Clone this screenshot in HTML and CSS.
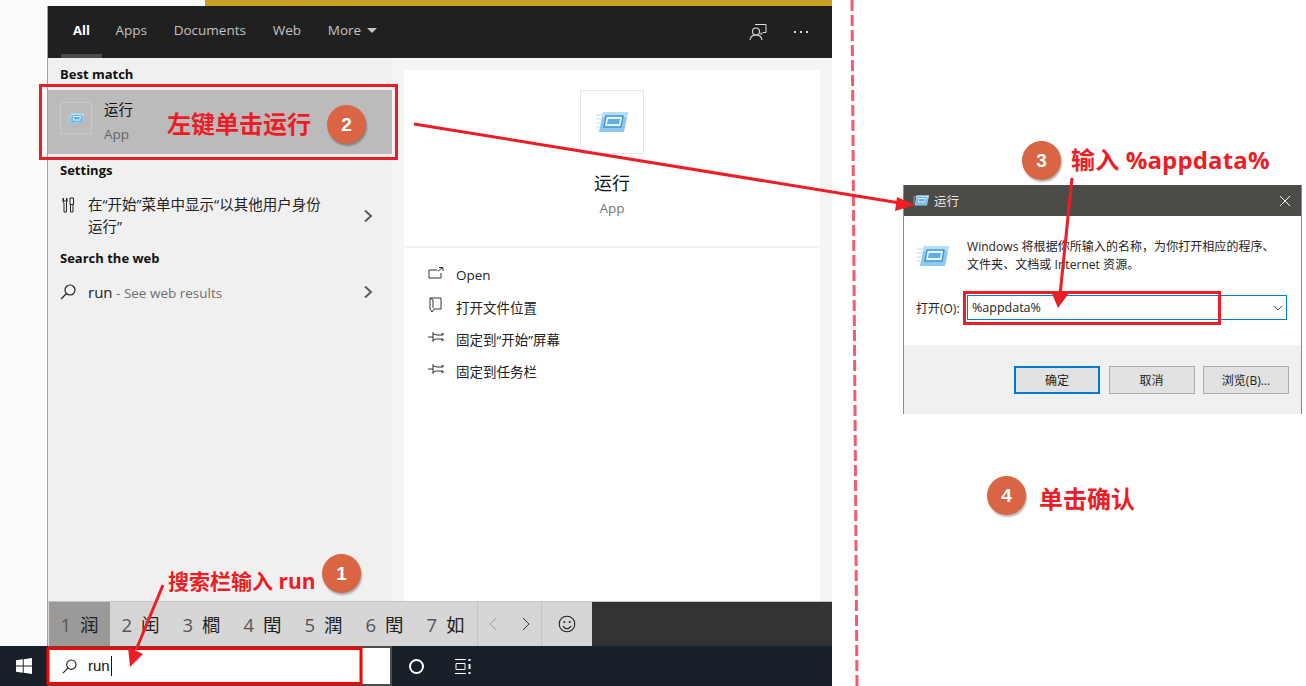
FILE: index.html
```html
<!DOCTYPE html>
<html lang="zh-CN">
<head>
  <meta charset="UTF-8">
  <title>运行 %appdata%</title>
  <link rel="stylesheet" href="styles.css">
</head>
<body>
  <svg class="defs" width="0" height="0">
    <symbol id="run-icon" viewBox="0 0 32 22">
      <path d="M7 1h25l-4 20H3z" fill="#8cc8f0"/>
      <path d="M7 1h25l-1 5H6z" fill="#b5def7"/>
      <path d="M10 5h17l-2 11H8z" fill="#eaf6fd" stroke="#3d95d8" stroke-width="1.4"/>
      <path d="M12 8h12l-1 5H11z" fill="#5eaee8"/>
      <path d="M0 4h6M0 8h5M0 12h4M0 16h3" stroke="#b5def7" stroke-width="1.2"/>
    </symbol>
    <symbol id="pin-icon" viewBox="0 0 16 12">
      <path d="M0 6h5M5 1v10M5 3l4 1h6V2l-2 2M5 9l4-1h6v2l-2-2" fill="none" stroke="#333" stroke-width="1"/>
    </symbol>
    <symbol id="chevron" viewBox="0 0 10 14">
      <path d="M2 1.5 8 7l-6 5.500" fill="none" stroke="#555" stroke-width="1.800"/>
    </symbol>
    <symbol id="search-icon" viewBox="0 0 16 16">
      <circle cx="10" cy="6" r="5" fill="none" stroke="#222" stroke-width="1.200"/>
      <path d="M6.500 9.500 1 15" stroke="#222" stroke-width="1.300"/>
    </symbol>
  </svg>

  <div class="desktop">
    <div class="screen">
      <div class="wallpaper-strip"></div>

      <div class="search-window">
        <header class="tabs">
          <nav class="tab-list">
            <span class="tab active">All</span>
            <span class="tab">Apps</span>
            <span class="tab">Documents</span>
            <span class="tab">Web</span>
            <span class="tab">More <i class="caret"></i></span>
          </nav>
          <div class="tab-tools">
            <svg class="feedback" width="18" height="18" viewBox="0 0 18 18">
              <path d="M6 1.500h11v8h-3l-2 2V9.500" fill="none" stroke="#ddd" stroke-width="1"/>
              <circle cx="7" cy="8.500" r="3.500" fill="#202020" stroke="#ddd" stroke-width="1.100"/>
              <path d="M1 17c.5-3.500 3-5 6-5s5.500 1.500 6 5" fill="none" stroke="#ddd" stroke-width="1.100"/>
            </svg>
            <span class="dots"><i></i><i></i><i></i></span>
          </div>
        </header>

        <div class="results">
          <aside class="result-list">
            <h3 class="group-title first">Best match</h3>
            <div class="match">
              <span class="match-icon"><svg width="16" height="11"><use href="#run-icon"/></svg></span>
              <div class="match-text">
                <div class="match-name">运行</div>
                <div class="match-type">App</div>
              </div>
            </div>

            <h3 class="group-title">Settings</h3>
            <div class="result-row settings-row">
              <svg class="row-icon" width="14" height="16" viewBox="0 0 14 16">
                <path d="M3 6v9h2.500V6M3 6C1.500 5 1.500 2 2.500 1v3h3V1c1 1 1 4-.5 5M9 1h3.500v6.500H9zM9.500 7.500V15h2.500V7.500" fill="none" stroke="#222" stroke-width="1"/>
              </svg>
              <div class="row-text">在“开始”菜单中显示“以其他用户身份运行”</div>
              <svg class="row-chevron" width="10" height="14"><use href="#chevron"/></svg>
            </div>

            <h3 class="group-title">Search the web</h3>
            <div class="result-row web-row">
              <svg class="row-icon" width="16" height="16"><use href="#search-icon"/></svg>
              <div class="row-text"><span class="query">run</span><span class="muted"> - See web results</span></div>
              <svg class="row-chevron" width="10" height="14"><use href="#chevron"/></svg>
            </div>
          </aside>

          <section class="preview">
            <div class="preview-head">
              <span class="preview-icon"><svg width="32" height="22"><use href="#run-icon"/></svg></span>
              <div class="preview-name">运行</div>
              <div class="preview-type">App</div>
            </div>
            <ul class="actions">
              <li>
                <svg width="16" height="12" viewBox="0 0 16 12"><path d="M9 3H1v8h12V6M10 4l5-3.500M11 .5h4V4" fill="none" stroke="#333" stroke-width="1"/></svg>
                Open
              </li>
              <li>
                <svg width="14" height="16" viewBox="0 0 14 16"><path d="M1 1h11v11H5l-2 3-2-3zM1 1l3 2v8" fill="none" stroke="#333" stroke-width="1"/></svg>
                打开文件位置
              </li>
              <li><svg width="16" height="12"><use href="#pin-icon"/></svg>固定到“开始”屏幕</li>
              <li><svg width="16" height="12"><use href="#pin-icon"/></svg>固定到任务栏</li>
            </ul>
          </section>
        </div>

        <footer class="ime">
          <div class="candidates">
            <span class="cand current"><b>1</b>润</span>
            <span class="cand"><b>2</b>闰</span>
            <span class="cand"><b>3</b>櫚</span>
            <span class="cand"><b>4</b>閏</span>
            <span class="cand"><b>5</b>潤</span>
            <span class="cand"><b>6</b>閏</span>
            <span class="cand"><b>7</b>如</span>
          </div>
          <div class="ime-nav">
            <svg width="10" height="14" viewBox="0 0 10 14"><path d="M8 1 2 7l6 6" fill="none" stroke="#999" stroke-width="1"/></svg>
            <svg width="10" height="14" viewBox="0 0 10 14"><path d="m2 1 6 6-6 6" fill="none" stroke="#333" stroke-width="1"/></svg>
          </div>
          <div class="ime-emoji">
            <svg width="18" height="18" viewBox="0 0 18 18">
              <circle cx="9" cy="9" r="7.800" fill="none" stroke="#222" stroke-width="1.100"/>
              <circle cx="6.300" cy="7" r="1" fill="#222"/><circle cx="11.700" cy="7" r="1" fill="#222"/>
              <path d="M5 11c1 2 2.500 2.800 4 2.800s3-.8 4-2.800" fill="none" stroke="#222" stroke-width="1.100"/>
            </svg>
          </div>
        </footer>
      </div>

      <div class="taskbar">
        <svg class="start-logo" width="16" height="16" viewBox="0 0 16 16">
          <path d="M0 2.300 6.800 1.300v6.200H0zM7.700 1.200 16 0v7.500H7.700zM0 8.400h6.800v6.300L0 13.700zM7.700 8.400H16V16l-8.300-1.200z" fill="#fff"/>
        </svg>
        <div class="taskbar-search">
          <svg width="15" height="15"><use href="#search-icon"/></svg>
          <span class="taskbar-query">run</span>
        </div>
        <span class="cortana"></span>
        <svg class="task-view" width="16" height="15" viewBox="0 0 16 15">
          <path d="M0 .5h11M0 14.500h11M1 4.500h9v6H1z" fill="none" stroke="#fff" stroke-width="1"/>
          <path d="M14.500 0v2M14.500 5v5M14.500 13v2" stroke="#fff" stroke-width="2"/>
        </svg>
      </div>
    </div>

    <div class="run-dialog">
      <div class="run-title">
        <svg width="16" height="11"><use href="#run-icon"/></svg>
        <span>运行</span>
        <svg class="run-close" width="12" height="12" viewBox="0 0 12 12"><path d="m1 1 10 10M11 1 1 11" stroke="#fff" stroke-width="1"/></svg>
      </div>
      <div class="run-body">
        <div class="run-info">
          <svg width="32" height="22"><use href="#run-icon"/></svg>
          <p>Windows 将根据你所输入的名称，为你打开相应的程序、<br>文件夹、文档或 Internet 资源。</p>
        </div>
        <div class="run-open">
          <label>打开(O):</label>
          <div class="run-input">
            <span>%appdata%</span>
            <svg width="10" height="6" viewBox="0 0 10 6"><path d="m1 1 4 4 4-4" fill="none" stroke="#444" stroke-width="1"/></svg>
          </div>
        </div>
      </div>
      <div class="run-footer">
        <button class="default">确定</button>
        <button>取消</button>
        <button>浏览(B)...</button>
      </div>
    </div>

    <!-- annotations drawn over the screenshot -->
    <svg class="marks" width="1306" height="686" viewBox="0 0 1306 686">
      <path class="divider" d="M852 0 857 686"/>
      <rect class="box" x="40.500" y="85.500" width="356" height="73"/>
      <rect class="box" x="964.500" y="292.500" width="255" height="31"/>
      <rect class="box search-box" x="48" y="648.500" width="313" height="35"/>
      <path class="arrow" d="M414 124 900 203"/>
      <path class="head" d="M915 205 895 211 897 197z"/>
      <path class="arrow" d="M1072 178 1060 295"/>
      <path class="head" d="M1058 308 1051 291 1069 293z"/>
      <path class="arrow" d="M163 585 136 650"/>
      <path class="head" d="M130 667 128 647 143 654z"/>
    </svg>

    <span class="step step-1">1</span>
    <span class="step step-2">2</span>
    <span class="step step-3">3</span>
    <span class="step step-4">4</span>
    <span class="note note-1">搜索栏输入 run</span>
    <span class="note note-2">左键单击运行</span>
    <span class="note note-3">输入 %appdata%</span>
    <span class="note note-4">单击确认</span>
  </div>
</body>
</html>
```

FILE: styles.css
```css
* {
  box-sizing: border-box;
  font-family: 'Open Sans', 'Noto Sans CJK SC', sans-serif;
}

html, body {
  margin: 0;
  height: 100%;
  overflow: hidden;
  background-color: #fff;
}

.defs {
  position: absolute;
}

.desktop {
  position: relative;
  width: 1306px;
  height: 686px;
}

.screen {
  width: 832px;
  height: 686px;
  display: flex;
  flex-direction: column;
  background-color: #fbfbfb;
}

.wallpaper-strip {
  height: 6px;
  margin-left: 205px;
  background-color: #c9a021;
}

.search-window {
  flex: 1;
  min-height: 0;
  margin-left: 47px;
  display: flex;
  flex-direction: column;
  border-left: 1px solid #a0a0a0;
}

/* tabs */
.tabs {
  height: 52px;
  flex: none;
  display: flex;
  justify-content: space-between;
  background-color: #202020;
  color: #c4c4c4;
}

.tab-list {
  display: flex;
  padding-left: 13px;
}

.tab {
  position: relative;
  padding: 0 13.400px;
  font-size: 13.500px;
  line-height: 48px;
}

.tab.active {
  width: 41px;
  padding: 0 0 0 12px;
  color: #fff;
  font-size: 13px;
  font-weight: 700;
}

.tab.active::after {
  content: '';
  position: absolute;
  left: 0;
  right: 0;
  bottom: 0;
  height: 4px;
  background-color: #4b4b4b;
}

.caret {
  display: inline-block;
  margin-left: 2px;
  vertical-align: 2px;
  border-left: 5px solid transparent;
  border-right: 5px solid transparent;
  border-top: 5px solid #c4c4c4;
}

.tab-tools {
  display: flex;
  align-items: center;
  gap: 27px;
  padding: 0 24px 0 0;
}

.dots {
  display: flex;
  gap: 4px;
}

.dots i {
  width: 2px;
  height: 2px;
  background-color: #ddd;
}

/* results */
.results {
  flex: 1;
  min-height: 0;
  display: flex;
}

.result-list {
  width: 344px;
  background-color: #f0f0f0;
}

.group-title {
  margin: 0;
  padding: 0 0 0 12px;
  font-size: 13px;
  line-height: 20px;
  color: #111;
}

.group-title.first {
  padding-top: 6px;
  height: 32px;
}

.match {
  height: 64px;
  display: flex;
  align-items: center;
  gap: 12px;
  padding-left: 12px;
  background-color: #bbb;
  margin-bottom: 6px;
}

.match-icon {
  width: 32px;
  height: 32px;
  margin-top: -8px;
  display: flex;
  align-items: center;
  justify-content: center;
  border: 1px solid #c8c8c8;
}

.match-name {
  font-size: 14.500px;
  line-height: 24px;
  color: #111;
}

.match-type {
  font-size: 13.500px;
  line-height: 24px;
  color: #666;
}

.result-row {
  display: flex;
  align-items: center;
  position: relative;
  padding-left: 12px;
}

.row-icon {
  flex: none;
  margin-right: 12px;
}

.row-text {
  width: 245px;
  font-size: 14.500px;
  line-height: 22px;
  color: #222;
}

.row-chevron {
  position: absolute;
  right: 19px;
}

.settings-row {
  height: 68px;
  padding-top: 3px;
}

.settings-row .row-icon {
  align-self: flex-start;
  margin-top: 14px;
  margin-left: 1px;
  margin-right: 13px;
}

.web-row {
  height: 46px;
  padding-top: 2px;
}

.query {
  font-size: 15px;
  color: #222;
}

.muted {
  font-size: 13.500px;
  color: #6f6f6f;
}

/* preview */
.preview {
  flex: 1;
  display: flex;
  flex-direction: column;
  padding: 12px 12px 0 12px;
  background-color: #f5f5f5;
}

.preview-head {
  height: 178px;
  padding-top: 20px;
  display: flex;
  flex-direction: column;
  align-items: center;
  background-color: #fff;
  border-bottom: 2px solid #f2f2f2;
}

.preview-icon {
  width: 64px;
  height: 64px;
  display: flex;
  align-items: center;
  justify-content: center;
  border: 1px solid #e6e6e6;
}

.preview-name {
  margin-top: 15px;
  font-size: 18px;
  line-height: 28px;
  color: #111;
}

.preview-type {
  font-size: 13.500px;
  line-height: 22px;
  color: #777;
}

.actions {
  flex: 1;
  margin: 0;
  padding: 11px 0 0 24px;
  list-style: none;
  background-color: #fff;
}

.actions li {
  height: 32px;
  display: flex;
  align-items: center;
  gap: 12px;
  font-size: 13.500px;
  color: #222;
}

.actions svg {
  width: 16px;
  margin-top: -4px;
}

/* ime candidate bar */
.ime {
  height: 45px;
  flex: none;
  display: flex;
  background: linear-gradient(to right, #d6d6d6 544px, #333 544px);
  border-top: 1px solid #c4c4c4;
}

.candidates {
  width: 428px;
  display: flex;
  margin-left: 1px;
}

.cand {
  width: 61px;
  display: flex;
  align-items: center;
  justify-content: center;
  gap: 9px;
  font-size: 18.500px;
  color: #222;
}

.cand b {
  font-weight: 400;
  color: #555;
}

.cand.current {
  background-color: #9b9a98;
}

.ime-nav {
  width: 65px;
  display: flex;
  align-items: center;
  justify-content: space-between;
  padding: 0 10px;
  border-left: 1px solid #c2c2c2;
  border-right: 1px solid #c2c2c2;
}

.ime-emoji {
  width: 49px;
  display: flex;
  align-items: center;
  justify-content: center;
}

/* taskbar */
.taskbar {
  height: 40px;
  flex: none;
  display: flex;
  align-items: center;
  background-color: #18202a;
}

.start-logo {
  margin-left: 16px;
  margin-right: 16px;
}

.taskbar-search {
  width: 344px;
  height: 40px;
  display: flex;
  align-items: center;
  gap: 11px;
  padding-left: 14px;
  background-color: #fff;
  border: 2px solid #4c4c4c;
  border-left: 0;
}

.taskbar-query {
  padding-right: 1px;
  font-family: 'Liberation Sans', sans-serif;
  font-size: 15px;
  color: #111;
  border-right: 1px solid #111;
  line-height: 20px;
}

.cortana {
  width: 15px;
  height: 15px;
  margin-left: 17px;
  border: 2px solid #fff;
  border-radius: 50%;
}

.task-view {
  margin-left: 31px;
}

/* run dialog */
.run-dialog {
  position: absolute;
  left: 903px;
  top: 185px;
  width: 399px;
  height: 229px;
  display: flex;
  flex-direction: column;
  border-left: 1px solid #8a8a8a;
  border-right: 1px solid #8a8a8a;
}

.run-title {
  height: 31px;
  flex: none;
  display: flex;
  align-items: center;
  gap: 5px;
  padding-left: 9px;
  background-color: #4d4b48;
  color: #e6e6e6;
  font-size: 12.500px;
}

.run-close {
  margin-left: auto;
  margin-right: 10px;
}

.run-body {
  height: 129px;
  flex: none;
  padding: 22px 14px 0 13px;
  background-color: #fff;
}

.run-info {
  display: flex;
  gap: 18px;
  align-items: flex-start;
}

.run-info svg {
  flex: none;
  margin-top: 7px;
}

.run-info p {
  margin: 0;
  font-size: 12px;
  letter-spacing: 0.050px;
  line-height: 18px;
  color: #222;
  white-space: nowrap;
}

.run-open {
  display: flex;
  align-items: center;
  margin-top: 21px;
  margin-left: -1px;
}

.run-open label {
  width: 51px;
  font-size: 12px;
  color: #222;
  white-space: nowrap;
}

.run-input {
  flex: 1;
  height: 25px;
  display: flex;
  align-items: center;
  justify-content: space-between;
  padding: 0 3px 0 4px;
  border: 1px solid #0078d7;
  font-size: 12.500px;
  color: #222;
}

.run-footer {
  flex: 1;
  display: flex;
  gap: 8.500px;
  padding: 21px 12px 0 110px;
  background-color: #f0f0f0;
}

.run-footer button {
  width: 86px;
  height: 28px;
  padding: 0;
  border: 1px solid #adadad;
  background-color: #e1e1e1;
  font-size: 12px;
  color: #222;
}

.run-footer button.default {
  border: 2px solid #0078d7;
}

/* annotations */
.marks {
  position: absolute;
  left: 0;
  top: 0;
  pointer-events: none;
}

.divider {
  fill: none;
  stroke: #ee4055;
  stroke-width: 3;
  stroke-dasharray: 11 4;
  opacity: 0.85;
}

.box {
  fill: none;
  stroke: #ee1c25;
  stroke-width: 3;
}

.search-box {
  stroke: #f00;
}

.arrow {
  fill: none;
  stroke: #ee1c25;
  stroke-width: 3;
}

.head {
  fill: #ee1c25;
}

.step {
  position: absolute;
  width: 39px;
  height: 39px;
  display: flex;
  align-items: center;
  justify-content: center;
  border-radius: 50%;
  background-color: #d96544;
  box-shadow: 1px 2px 2px rgba(0, 0, 0, 0.3);
  color: #fff;
  font-weight: 700;
  font-size: 19px;
  font-family: 'Liberation Sans', sans-serif;
}

.step-1 { left: 322px; top: 554px; }
.step-2 { left: 327px; top: 105px; }
.step-3 { left: 1022px; top: 141px; }
.step-4 { left: 987px; top: 476px; }

.note {
  position: absolute;
  color: #ee1c25;
  font-weight: 700;
  white-space: nowrap;
  font-family: 'Open Sans', 'Noto Sans CJK SC', sans-serif;
}

.note-1 { left: 168px; top: 566px; font-size: 21px; line-height: 30px; }
.note-2 { left: 167px; top: 107px; font-size: 24px; line-height: 34px; }
.note-3 { left: 1071px; top: 143px; font-size: 24px; letter-spacing: 0.150px; line-height: 34px; }
.note-4 { left: 1039px; top: 482px; font-size: 24px; line-height: 34px; }
```
